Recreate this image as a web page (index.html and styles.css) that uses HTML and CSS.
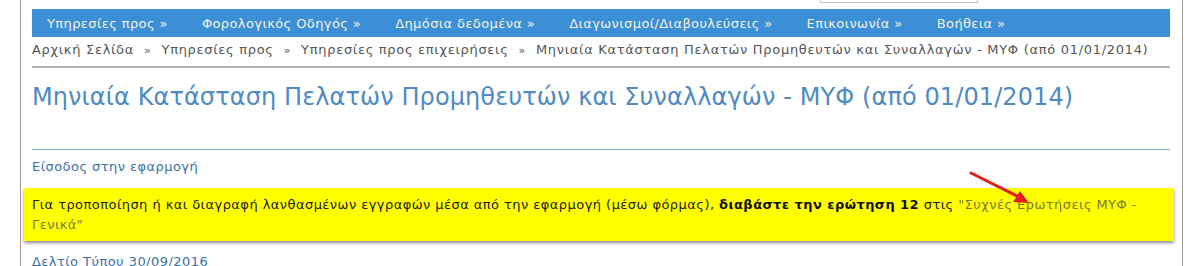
FILE: index.html
```html
<!DOCTYPE html>
<html lang="el">
<head>
  <meta charset="UTF-8" />
  <title>Μηνιαία Κατάσταση Πελατών Προμηθευτών και Συναλλαγών - ΜΥΦ</title>
  <link rel="stylesheet" href="styles.css">
</head>
<body>
  <div class="page">
    <div class="top">
      <div class="search"></div>
    </div>
    <ul class="nav">
      <li>Υπηρεσίες προς »</li>
      <li>Φορολογικός Οδηγός »</li>
      <li>Δημόσια δεδομένα »</li>
      <li>Διαγωνισμοί/Διαβουλεύσεις »</li>
      <li>Επικοινωνία »</li>
      <li>Βοήθεια »</li>
    </ul>
    <div class="crumbs">
      <span>Αρχική Σελίδα</span><span class="sep">»</span><span>Υπηρεσίες προς</span><span class="sep">»</span><span>Υπηρεσίες προς επιχειρήσεις</span><span class="sep">»</span><span>Μηνιαία Κατάσταση Πελατών Προμηθευτών και Συναλλαγών - ΜΥΦ (από 01/01/2014)</span>
    </div>
    <h1 class="title">Μηνιαία Κατάσταση Πελατών Προμηθευτών και Συναλλαγών - ΜΥΦ (από 01/01/2014)</h1>
    <div class="content">
      <a class="link">Είσοδος στην εφαρμογή</a>
      <div class="notice">
        Για τροποποίηση ή και διαγραφή λανθασμένων εγγραφών μέσα από την εφαρμογή (μέσω φόρμας), <b>διαβάστε την ερώτηση 12</b> στις <a class="faq">"Συχνές Ερωτήσεις ΜΥΦ - Γενικά"</a>
        <svg class="arrow" width="70" height="40" viewBox="0 0 70 40">
          <line x1="2" y1="2" x2="52" y2="27" stroke="#e0201c" stroke-width="3" stroke-linecap="round"/>
          <polygon points="60,32 44,31 51,20" fill="#e0201c"/>
        </svg>
      </div>
      <a class="link">Δελτίο Τύπου 30/09/2016</a>
    </div>
  </div>
</body>
</html>
```

FILE: styles.css
```css
body { margin: 0; background: #fff; font-family: "DejaVu Sans", Verdana, sans-serif; font-size: 13px; color: #222; }
.page { margin-left: 20px; width: 1138px; min-height: 266px; border-left: 1px solid #9a9a9a; border-right: 1px solid #9a9a9a; padding: 0 12px 0 11px; }
.top { height: 9px; display: flex; }
.search { margin-left: 788px; width: 156px; height: 2px; border: 1px solid #c4c4c4; border-top: none; background: #fff; }
.nav { list-style: none; margin: 0; padding: 0 0 0 15px; height: 28px; background: #3a8fd6; display: flex; gap: 34px; align-items: center; font-size: 13px; letter-spacing: 0.4px; color: #f4f1dc; }
.crumbs { height: 29px; line-height: 26px; border-bottom: 2px solid #b4b4b4; color: #555; font-size: 13px; letter-spacing: 0.7px; white-space: nowrap; }
.sep { margin: 0 10px; font-size: 11px; }
.title { margin: 0; padding-top: 12px; height: 69px; border-bottom: 1px solid #86acd6; font-weight: normal; font-size: 24px; letter-spacing: 0.1px; color: #4f8bc2; line-height: 34px; white-space: nowrap; }
.content { padding-top: 8px; }
.link { display: block; color: #3c6fa8; font-size: 13px; letter-spacing: 0.45px; line-height: 18px; }
.notice { position: relative; margin: 12px -4px 12px -8px; padding: 7px 4px 6px 8px; background: #ffff00; box-shadow: 0 2px 3px rgba(0,0,0,0.45); line-height: 20px; font-size: 13px; letter-spacing: 0.45px; color: #1a1a1a; }
.notice b { color: #111; }
.faq { color: #7b7a44; }
.arrow { position: absolute; left: 945px; top: -17px; }
```
